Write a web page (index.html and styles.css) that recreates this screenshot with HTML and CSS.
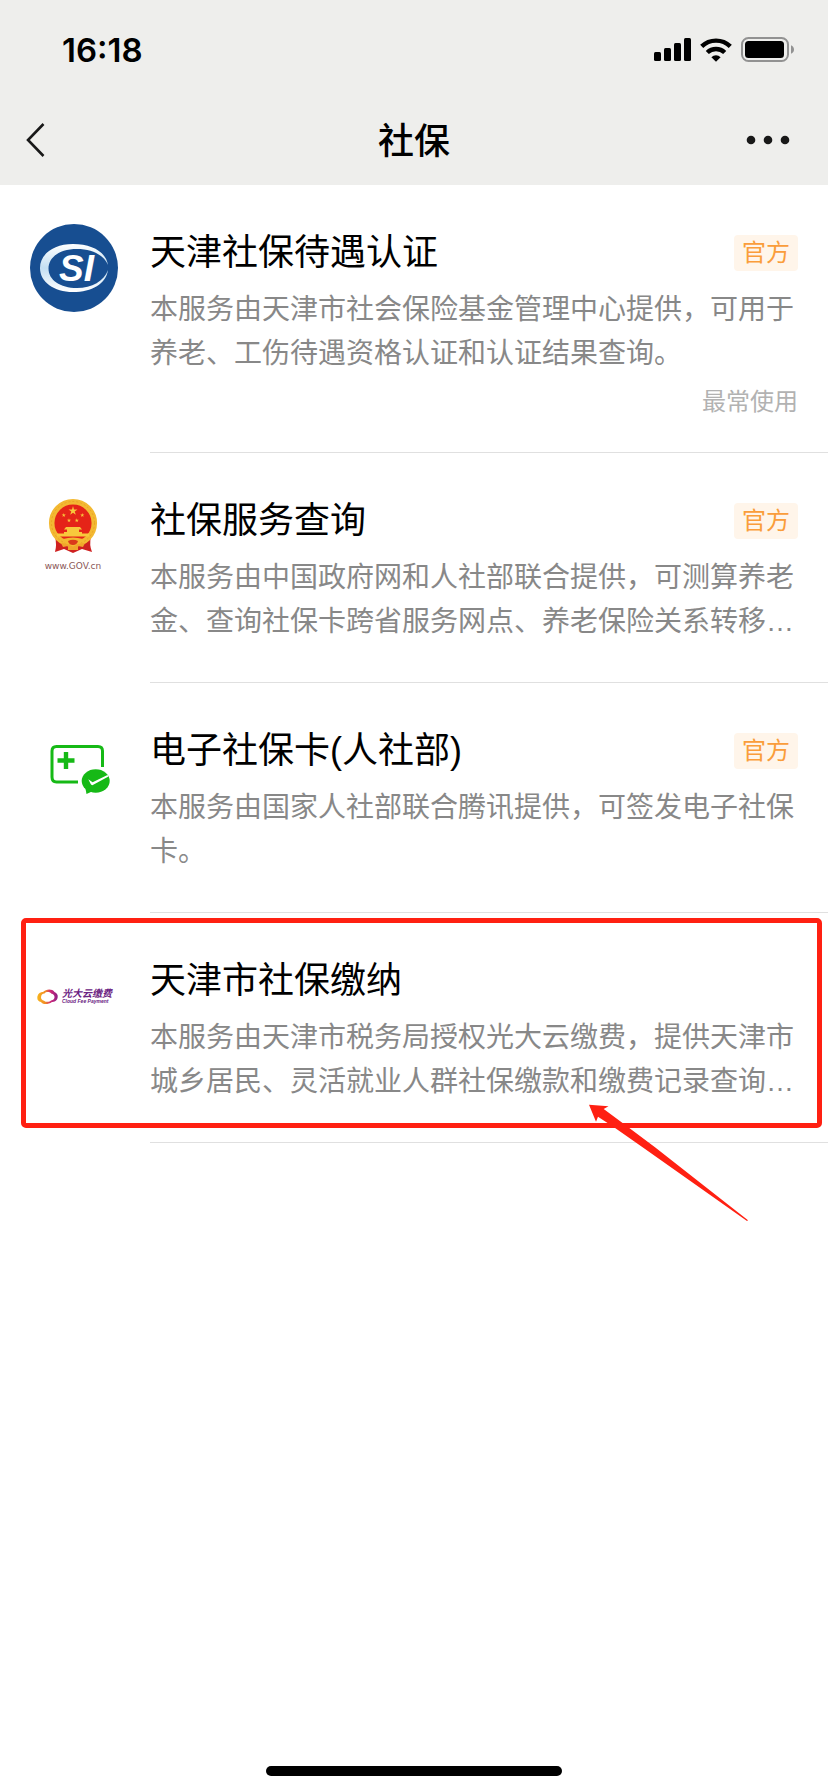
FILE: index.html
```html
<!DOCTYPE html>
<html lang="zh-CN">
<head>
<meta charset="utf-8">
<meta name="viewport" content="width=device-width, initial-scale=1">
<title>社保</title>
<link rel="stylesheet" href="styles.css">
</head>
<body>
<header class="header">
  <div class="status">
    <time class="clock">16:18</time>
    <div class="indicators">
      <svg width="37" height="24" viewBox="0 0 37 24" aria-hidden="true">
        <rect x="0" y="14" width="7" height="9" rx="1.5"/><rect x="10" y="10" width="7" height="13" rx="1.5"/><rect x="20" y="5" width="7" height="18" rx="1.5"/><rect x="30" y="0" width="7" height="23" rx="1.5"/>
      </svg>
      <svg width="32" height="24" viewBox="0 0 32 24" aria-hidden="true">
        <g fill="none" stroke="#000" stroke-width="4.4"><path d="M1.7 8.4A20.5 20.5 0 0 1 30.3 8.4"/><path d="M7.3 14.5A12.4 12.4 0 0 1 24.7 14.5"/></g>
        <path d="M11.4 19.2A6.6 6.6 0 0 1 20.6 19.2L16 23.8Z"/>
      </svg>
      <svg width="54" height="25" viewBox="0 0 54 25" aria-hidden="true">
        <rect x="1" y="1" width="46" height="23" rx="6.5" fill="none" stroke="#929292" stroke-width="2"/><rect x="4" y="4" width="39" height="17" rx="3.5"/><path d="M50 8.2Q53 9.5 53 12.5T50 16.8Z" fill="#929292"/>
      </svg>
    </div>
  </div>
  <nav class="nav">
    <button class="nav-button" type="button" aria-label="返回">
      <svg width="20" height="36" viewBox="0 0 20 36"><path d="M17.5 2L2 18L17.5 34" fill="none" stroke="#181818" stroke-width="2.6"/></svg>
    </button>
    <h1 class="nav-title">社保</h1>
    <button class="nav-button nav-more" type="button" aria-label="更多">
      <svg width="44" height="10" viewBox="0 0 44 10" fill="#181818"><circle cx="5" cy="5" r="4.3"/><circle cx="22" cy="5" r="4.3"/><circle cx="39" cy="5" r="4.3"/></svg>
    </button>
  </nav>
</header>

<main class="content">
  <ul class="services">
    <li class="service">
      <a class="service-link" href="#certification">
        <svg class="logo" viewBox="0 0 88 88" aria-hidden="true">
          <defs><linearGradient id="ring" x1="0" y1="0" x2="0" y2="1"><stop offset="0" stop-color="#fff"/><stop offset=".5" stop-color="#c3dff2"/><stop offset="1" stop-color="#fff"/></linearGradient></defs>
          <circle cx="44" cy="44" r="44" fill="#174e91"/>
          <path d="M78 41C76 28 62 20 43 20C24 20 10 30 10 44C10 58 24 68 43 68C62 68 76 60 78 46C74 57 62 64 47 64C30 64 18.500 56 18.500 44.500C18.500 33 30 25 47 25C62 25 74 31 78 41Z" fill="url(#ring)"/>
          <text class="si" x="29" y="57">SI</text>
        </svg>
        <div class="body">
          <div class="heading"><h2 class="title">天津社保待遇认证</h2><span class="badge">官方</span></div>
          <p class="desc">本服务由天津市社会保险基金管理中心提供，可用于养老、工伤待遇资格认证和认证结果查询。</p>
          <p class="note">最常使用</p>
        </div>
      </a>
    </li>
    <li class="service">
      <a class="service-link" href="#query">
        <svg class="logo" viewBox="0 0 88 88" aria-hidden="true">
          <path d="M25 60Q27 53 25 44L61 44Q59 53 62 60L52 57L43 61L34 57Z" fill="#cf2020"/>
          <circle cx="43" cy="31" r="21.300" fill="#e52418" stroke="#f3b932" stroke-width="5.500"/>
          <circle cx="43" cy="31" r="21.500" fill="none" stroke="#e5961f" stroke-width=".6" stroke-dasharray="2 2"/>
          <g fill="#f8c83c">
            <path id="star" d="M43 14L44 17.400H47.500L44.700 19.400L45.800 22.700L43 20.700L40.200 22.700L41.300 19.400L38.500 17.400H42Z"/>
            <use href="#star" transform="translate(14 14.500) scale(.46)"/>
            <use href="#star" transform="translate(32.500 14.500) scale(.46)"/>
            <use href="#star" transform="translate(19.200 19.800) scale(.46)"/>
            <use href="#star" transform="translate(27 19.800) scale(.46)"/>
            <path d="M36 35H50L52 37.500H34ZM37 37H49V40H52V41.500H34V40H37ZM27 41.500H59V44.500H27Z"/>
          </g>
          <path d="M33 47Q43 44 53 47L50 52H36Z" fill="#f3b932"/>
          <path d="M31 51Q37 51 43 55Q49 51 55 51L53 55L48 54L48 58H38V54L33 55Z" fill="#f0a52c"/>
          <path d="M38 49Q43 46.500 48 49Q47 53 43 53Q39 53 38 49Z" fill="#da3a1b"/>
          <text class="gov" x="43" y="77" text-anchor="middle">www.GOV.cn</text>
        </svg>
        <div class="body">
          <div class="heading"><h2 class="title">社保服务查询</h2><span class="badge">官方</span></div>
          <p class="desc">本服务由中国政府网和人社部联合提供，可测算养老金、查询社保卡跨省服务网点、养老保险关系转移…</p>
        </div>
      </a>
    </li>
    <li class="service">
      <a class="service-link" href="#card">
        <svg class="logo" viewBox="0 0 88 88" aria-hidden="true">
          <path d="M72.500 45V29Q72.500 24.500 68 24.500H26.500Q22 24.500 22 29V55Q22 60 26.500 60H48" fill="none" stroke="#16b916" stroke-width="3"/>
          <path d="M36 30V47M27.500 38.500H44.500" stroke="#16b916" stroke-width="4.400"/>
          <path d="M55.500 66.500L56.500 72L62 69.500Z" fill="#16b916"/>
          <ellipse cx="65.700" cy="59" rx="14" ry="11.700" fill="#16b916"/>
          <path d="M58.300 57.300L62.600 60.300L77.500 53L78.500 54.500L62.800 63Q61.500 63.500 60.700 62Z" fill="#fff"/>
        </svg>
        <div class="body">
          <div class="heading"><h2 class="title">电子社保卡(人社部)</h2><span class="badge">官方</span></div>
          <p class="desc">本服务由国家人社部联合腾讯提供，可签发电子社保卡。</p>
        </div>
      </a>
    </li>
    <li class="service">
      <a class="service-link" href="#payment">
        <svg class="logo" viewBox="0 0 88 88" aria-hidden="true">
          <defs><linearGradient id="cloud" x1="0" y1="0" x2="1" y2="0"><stop offset="0" stop-color="#f8b61d"/><stop offset=".4" stop-color="#f08a26"/><stop offset=".65" stop-color="#cf2a78"/><stop offset="1" stop-color="#8b1c86"/></linearGradient></defs>
          <path fill-rule="evenodd" fill="url(#cloud)" d="M7.300 46C7.300 42 10 40 13 40C16 37 22 36.500 24.500 40C27 41 28 43 27.700 45C27.500 49 24 50 22 50C18 53 12 52.500 11 50C8.500 49.500 7.300 48 7.300 46ZM11 45.500C11 47 12 48.500 14 48.700C16 50.500 20 50 21 48.500C23.500 48 24.700 46.500 24.500 45C24.500 43 23 42 21.500 41.700C20 39.500 16 39.500 14.500 41.500C12.500 41.500 11 43 11 45.500Z"/>
          <text class="cloud-name" x="32" y="45">光大云缴费</text>
          <text class="cloud-sub" x="32" y="51">Cloud Fee Payment</text>
        </svg>
        <div class="body">
          <div class="heading"><h2 class="title">天津市社保缴纳</h2></div>
          <p class="desc">本服务由天津市税务局授权光大云缴费，提供天津市城乡居民、灵活就业人群社保缴款和缴费记录查询…</p>
        </div>
      </a>
      <div class="highlight"></div>
      <svg class="arrow" width="161" height="118" viewBox="0 0 161 118" aria-hidden="true"><path d="M1 .7L20.500 2.300L15.700 5L40.300 23.300L67 43.300L160 116.300L159 117L55.300 43.700L25.300 22.700L10 12.700L8 17.700Z" fill="#ff2012"/></svg>
    </li>
  </ul>
</main>

<footer class="home"><div class="home-bar"></div></footer>
</body>
</html>
```
FILE: styles.css
```css
* { box-sizing: border-box; }

body {
  display: flex;
  flex-direction: column;
  min-height: 100vh;
  margin: 0;
  background: #fff;
  color: #000;
  font-family: "Liberation Sans", "Noto Sans CJK SC", sans-serif;
}

h1, h2, p, ul { margin: 0; padding: 0; font-weight: 400; }
svg { display: block; flex: none; }

.header { padding-bottom: 4px; background: #eeeeec; }

.status {
  display: flex;
  align-items: center;
  justify-content: space-between;
  height: 99px;
  padding: 0 33px 0 62px;
}
.clock { font: 600 33px/40px Inter, sans-serif; }
.indicators { display: flex; align-items: center; gap: 9px; }

.nav {
  display: grid;
  grid-template-columns: 1fr auto 1fr;
  align-items: center;
  height: 82px;
  padding: 0 38px 0 26px;
}
.nav-title { padding: 4px 0 0 12px; font-size: 36px; line-height: 48px; font-weight: 500; }
.nav-button {
  justify-self: start;
  padding: 0;
  border: 0;
  background: none;
}
.nav-more { justify-self: end; }

.content { flex: 1; }
.services { list-style: none; }
.service { position: relative; }
.service-link {
  display: flex;
  gap: 32px;
  padding-left: 30px;
  color: inherit;
  text-decoration: none;
}
.logo { width: 88px; height: 88px; margin-top: 39px; }
.body {
  flex: 1;
  min-width: 0;
  padding: 46px 30px 38px 0;
  border-bottom: 1px solid #e0e0e0;
}
.heading {
  display: flex;
  align-items: center;
  justify-content: space-between;
  height: 44px;
  margin-bottom: 13px;
}
.title { font-size: 36px; line-height: 44px; }
.badge {
  padding: 0 8px;
  border-radius: 4px;
  background: #fff5ea;
  color: #fa9d3b;
  font-size: 24px;
  line-height: 36px;
}
.desc { color: #888; font-size: 28px; line-height: 44px; }
.note {
  margin-top: 14px;
  color: #b2b2b2;
  font-size: 24px;
  line-height: 24px;
  text-align: right;
}

.si { font: italic 700 37px "Liberation Sans", sans-serif; fill: #fff; }
.gov { font: 9px "DejaVu Sans", sans-serif; fill: #8b5757; }
.cloud-name { font: italic 700 10px "Noto Sans CJK SC", sans-serif; fill: #6b2382; }
.cloud-sub { font: italic 700 5px "Liberation Sans", sans-serif; fill: #6b2382; }

.highlight {
  position: absolute;
  inset: 5px 6px 15px 21px;
  border: 5px solid #ff2012;
  border-radius: 5px;
  pointer-events: none;
}
.arrow { position: absolute; top: 191px; right: 79px; pointer-events: none; }

.home { display: flex; justify-content: center; padding: 16px 0; }
.home-bar { width: 296px; height: 10px; border-radius: 5px; background: #000; }
```
